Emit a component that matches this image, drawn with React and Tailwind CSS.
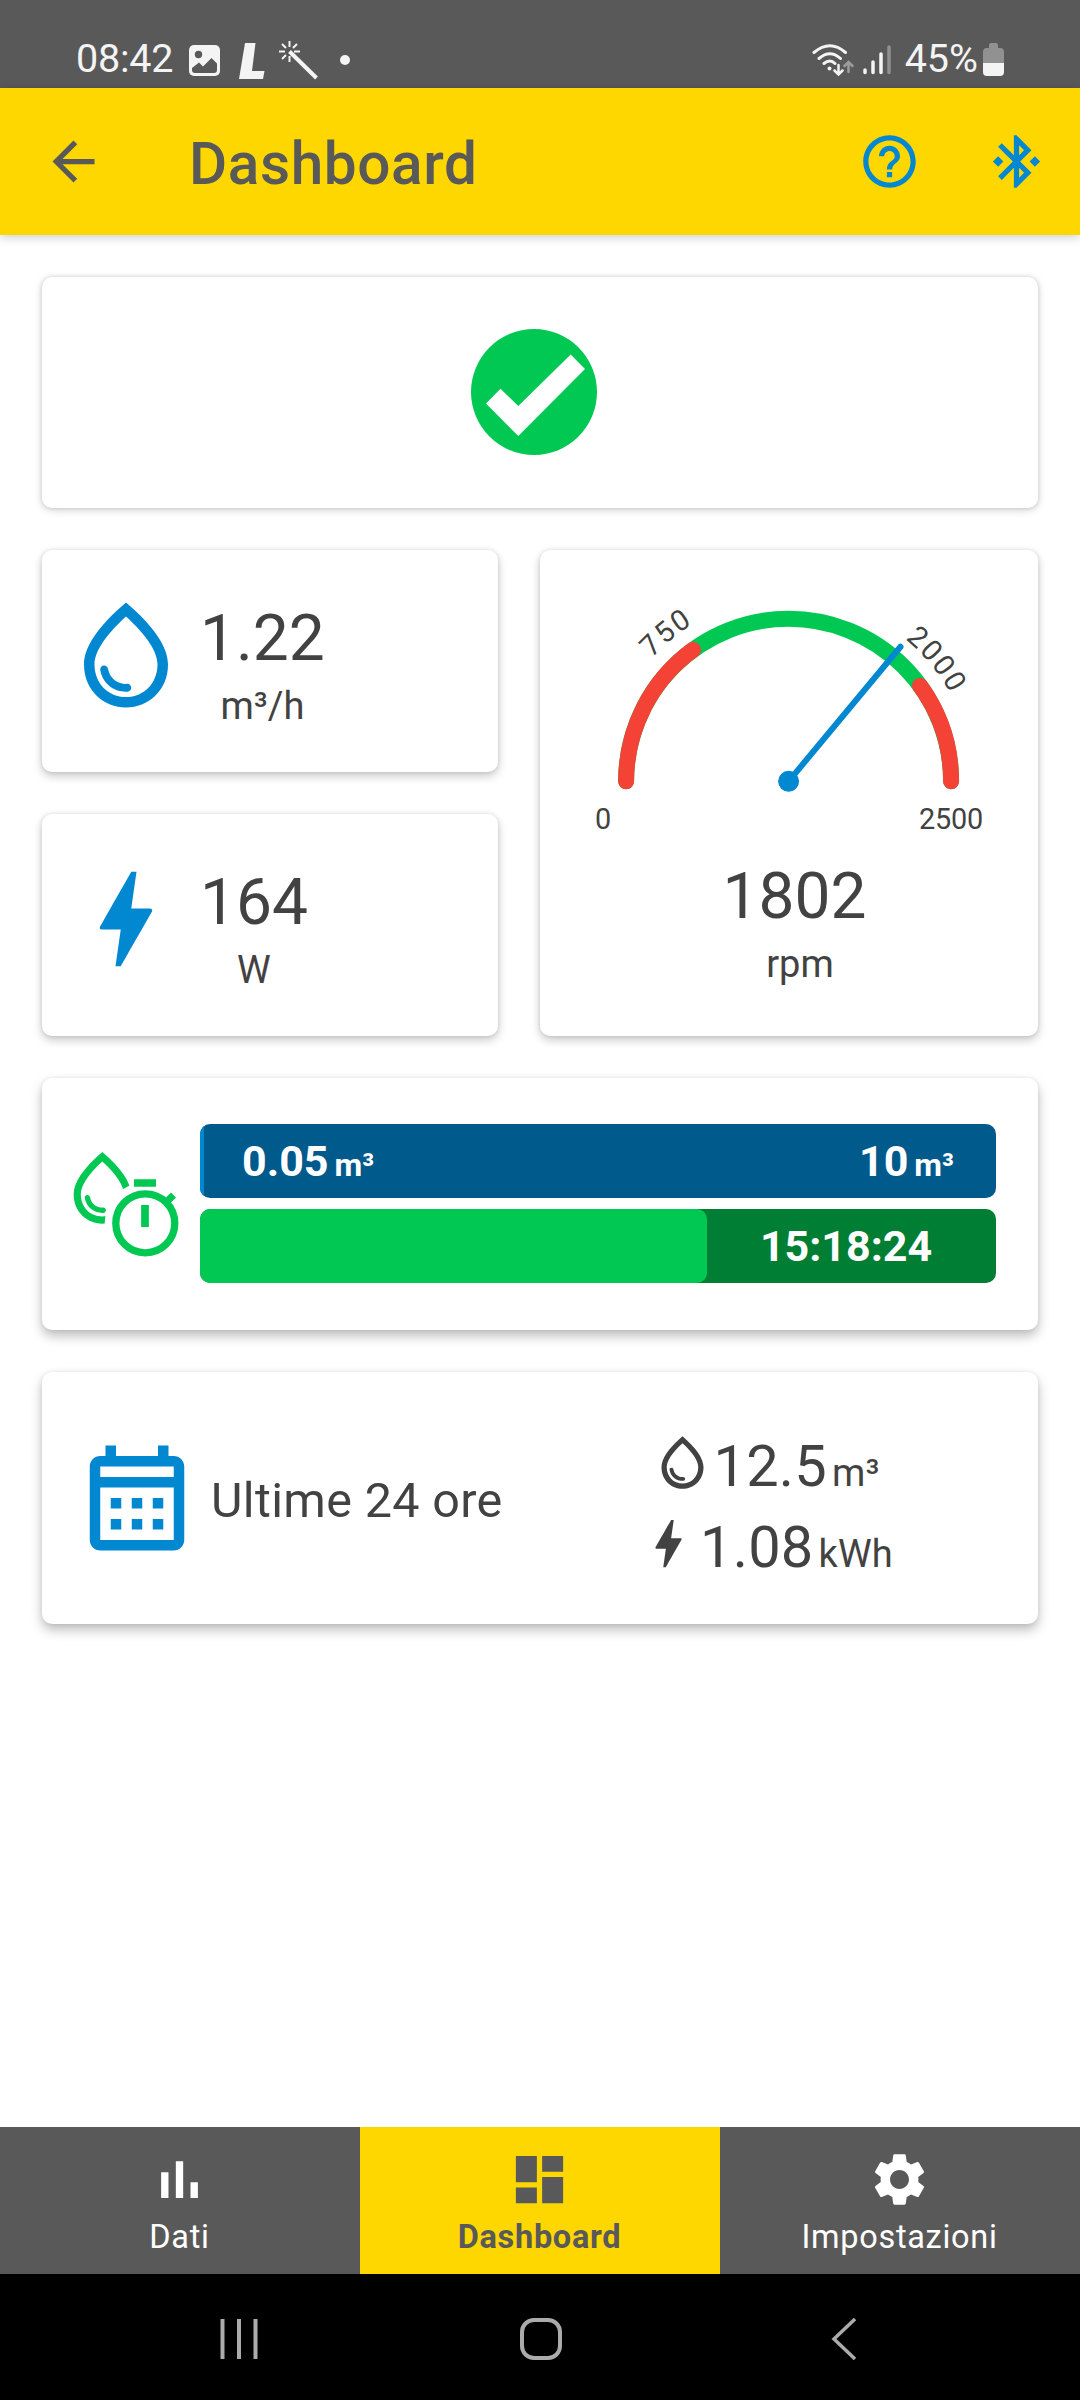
import {
  MdArrowBack,
  MdBolt,
  MdDashboard,
  MdHelpOutline,
  MdOutlineWaterDrop,
  MdSettings,
} from "react-icons/md";

const CARD = "rounded-[10px] bg-white";
const SHADOW_TOP = "shadow-[0_2px_9px_rgba(0,0,0,0.18),0_0_4px_rgba(0,0,0,0.12)]";
const SHADOW_MID = "shadow-[0_4px_10px_rgba(0,0,0,0.22),0_0_4px_rgba(0,0,0,0.1)]";
const SHADOW_LOW = "shadow-[0_6px_12px_rgba(0,0,0,0.26),0_0_4px_rgba(0,0,0,0.08)]";

const TABS = [
  { label: "Dati", icon: BarsIcon },
  { label: "Dashboard", icon: MdDashboard, active: true },
  { label: "Impostazioni", icon: MdSettings },
];

// Gauge geometry, in the card's own pixels
const CX = 248.6;
const CY = 231.3;
const RADIUS = 162.5;
const MAX_RPM = 2500;

function polar(value, radius) {
  const a = Math.PI * (1 - value / MAX_RPM);
  return [CX + radius * Math.cos(a), CY - radius * Math.sin(a)];
}

function arc(from, to, radius = RADIUS) {
  const [x1, y1] = polar(from, radius);
  const [x2, y2] = polar(to, radius);
  return `M${x1} ${y1}A${radius} ${radius} 0 0 1 ${x2} ${y2}`;
}

function BarsIcon({ size }) {
  return (
    <svg width={size} height={size} viewBox="0 0 24 24" fill="currentColor">
      <path d="M5 9.200h2.800V19H5zM10.600 5h2.800v14h-2.800zM16.200 13H19v6h-2.800z" />
    </svg>
  );
}

function CalendarIcon({ size, className }) {
  return (
    <svg width={size} height={size} viewBox="0 0 24 24" fill="currentColor" className={className}>
      <path
        fillRule="evenodd"
        d="M19 4h-1V2h-2v2H8V2H6v2H5C3.900 4 3 4.900 3 6v14c0 1.100.9 2 2 2h14c1.100 0 2-.9 2-2V6c0-1.100-.9-2-2-2zM5 6h14v2H5zM5 10h14v10H5z"
      />
      <path d="M7 12h2v2H7zM11 12h2v2h-2zM15 12h2v2h-2zM7 16h2v2H7zM11 16h2v2h-2zM15 16h2v2h-2z" />
    </svg>
  );
}

function StatusBar() {
  return (
    <div className="flex h-[88px] items-start bg-[#595959] pt-[36px] pr-[76px] pl-[76px] text-[39.5px] leading-[46px] text-[#f4f4f4]">
      <span className="tracking-[-0.2px]">08:42</span>
      <svg className="mt-[9px] ml-[16px]" width="31" height="31" viewBox="0 0 31 31">
        <rect width="31" height="31" rx="5" fill="#f4f4f4" />
        <circle cx="9.500" cy="9.500" r="3.700" fill="#595959" />
        <path d="M3 23L10 17.500L14 21.500L22.500 13L28 18.500V25Q28 28 25 28H6Q3 28 3 25Z" fill="#595959" />
      </svg>
      <svg className="mt-[7px] ml-[19px]" width="26" height="36" viewBox="0 0 26 36" fill="#f4f4f4">
        <path d="M6 0H16.500L13 28H25.500L24 36H0Z" />
      </svg>
      <svg className="mt-[5px] ml-[14px]" width="40" height="39" viewBox="0 0 40 39" fill="none" stroke="#f4f4f4">
        <path d="M10.500 0V6M10.500 15V21M0 10.500H6M15 10.500H21M3 3L7 7M18 3L14 7M3 18L7 14" strokeWidth="2" />
        <path d="M10.500 10.500L37.500 37" strokeWidth="4" />
      </svg>
      <span className="mt-[19px] ml-[21px] size-[10px] rounded-full bg-[#f4f4f4]" />
      <svg className="mt-[8px] ml-auto" width="43" height="32" viewBox="0 0 43 32" fill="none" stroke="#f4f4f4" strokeLinecap="round">
        <path d="M2 8.500Q18 -5 33.500 8.500M7 14.500Q18 5 28.500 14.500M12 19.500Q18 14.500 23 19.500" strokeWidth="3" />
        <circle cx="17.500" cy="24.500" r="2" fill="#f4f4f4" stroke="none" />
        <path d="M26.500 21V30M22.500 26.500L26.500 30.500L30.500 26.500" strokeWidth="2.500" />
        <path d="M36.500 28V19M32.500 22L36.500 18L40.500 22" stroke="#9c9c9c" strokeWidth="2.500" />
      </svg>
      <svg className="mt-[9px] ml-[8px]" width="28" height="30" viewBox="0 0 28 30" fill="none" strokeWidth="3.500" strokeLinecap="round">
        <path d="M2 25V27.500M10 17V27.500M18 9V27.500" stroke="#f4f4f4" />
        <path d="M26 2V27.500" stroke="#919191" />
      </svg>
      <span className="ml-[14px]">45%</span>
      <svg className="mt-[7px] ml-[5px]" width="21" height="33" viewBox="0 0 21 33">
        <path d="M6 5V2Q6 0 8 0H13Q15 0 15 2V5H17Q21 5 21 9V20H0V9Q0 5 4 5Z" fill="#919191" />
        <path d="M0 20H21V29Q21 33 17 33H4Q0 33 0 29Z" fill="#f4f4f4" />
      </svg>
    </div>
  );
}

function AppBar() {
  return (
    <header className="flex h-[147px] items-center bg-[#ffd700] pr-[32px] pl-[42px] text-[#595959] shadow-[0_2px_10px_rgba(0,0,0,0.2)]">
      <MdArrowBack size={63} />
      <h1 className="ml-[84px] pt-[5px] text-[58.5px] leading-[68px] font-medium tracking-[0.6px]">Dashboard</h1>
      <MdHelpOutline size={63} className="ml-auto text-[#0288d1]" />
      <svg width="63" height="63" viewBox="0 0 24 24" className="ml-[64px] text-[#0288d1]" fill="currentColor">
        <path d="M7 12l-2-2-2 2 2 2 2-2zm10.710-4.290L12 2h-1v7.590L6.410 5 5 6.410 10.590 12 5 17.590 6.410 19 11 14.410V22h1l5.710-5.710-4.300-4.290 4.300-4.290zM13 5.830l1.880 1.880L13 9.590V5.830zm1.880 10.460L13 18.170v-3.760l1.880 1.880zM19 10l-2 2 2 2 2-2-2-2z" />
      </svg>
    </header>
  );
}

function StatusCard() {
  return (
    <section className={`${CARD} ${SHADOW_TOP} flex h-[231px] items-start justify-center pt-[52px] pr-[12px]`}>
      <svg width="126" height="126" viewBox="0 0 126 126">
        <circle cx="63" cy="63" r="63" fill="#00c853" />
        <path d="M15 74.500L29.500 59.700L47.300 77L99.700 25.500L114 40L47.300 107Z" fill="#fff" />
      </svg>
    </section>
  );
}

function MetricCard({ icon: Icon, value, unit }) {
  return (
    <section className={`${CARD} ${SHADOW_MID} flex h-[222px] items-start pt-[42px] pl-[21px]`}>
      <Icon size={126} className="shrink-0 text-[#0288d1]" />
      <div className="ml-[11px] flex flex-col items-center pt-[10px]">
        <span className="text-[64px] leading-[74px]">{value}</span>
        <span className="mt-[9px] text-[38px] leading-[43px]">{unit}</span>
      </div>
    </section>
  );
}

function GaugeCard({ rpm }) {
  const [nx, ny] = polar(rpm, 175);
  return (
    <section className={`${CARD} ${SHADOW_MID} flex w-[498px] flex-col items-center`}>
      <svg width="498" height="310" viewBox="0 0 498 310" fill="none" strokeLinecap="round">
        <path d={arc(0, MAX_RPM)} stroke="#00c853" strokeWidth="16" />
        <path d={arc(0, 750)} stroke="#f44336" strokeWidth="16" />
        <path d={arc(2000, MAX_RPM)} stroke="#f44336" strokeWidth="16" />
        <path d={`M${CX} ${CY}L${nx} ${ny}`} stroke="#0288d1" strokeWidth="6" />
        <circle cx={CX} cy={CY} r="10.500" fill="#0288d1" />
        <path id="gauge-labels" d={arc(0, MAX_RPM, 184)} />
        <g fill="#424242" fontSize="28.875">
          <text letterSpacing="2">
            <textPath href="#gauge-labels" startOffset="135">750</textPath>
          </text>
          <text letterSpacing="2">
            <textPath href="#gauge-labels" startOffset="415">2000</textPath>
          </text>
          <text x="55" y="279">0</text>
          <text x="379" y="279" letterSpacing="-0.200">2500</text>
        </g>
      </svg>
      <span className="pl-[11px] text-[64px] leading-[74px]">{rpm}</span>
      <span className="mt-[9px] pl-[22px] text-[38px] leading-[43px]">rpm</span>
    </section>
  );
}

function DropTimerIcon() {
  return (
    <svg width="108" height="108" viewBox="72 1150 108 108" fill="none" stroke="#00c853" className="shrink-0">
      <mask id="timer-cut">
        <rect x="50" y="1140" width="140" height="130" fill="#fff" stroke="none" />
        <circle cx="145.300" cy="1223" r="40.600" fill="#000" stroke="none" />
      </mask>
      <g mask="url(#timer-cut)">
        <g transform="translate(59.300 1144.800) scale(3.585)" fill="#00c853" stroke="none">
          <path d="M12 2c-5.330 4.550-8 8.480-8 11.800 0 4.980 3.800 8.200 8 8.200s8-3.220 8-8.200c0-3.320-2.670-7.250-8-11.800zm0 18c-3.350 0-6-2.570-6-6.200 0-2.340 1.950-5.440 6-9.140 4.050 3.700 6 6.790 6 9.140 0 3.630-2.650 6.200-6 6.200zm-4.170-6c.37 0 .67.26.74.62.41 2.220 2.280 2.980 3.640 2.870.43-.02.79.32.79.75 0 .4-.32.73-.72.75-2.130.13-4.620-1.090-5.190-4.120a.75.75 0 01.740-.87z" />
        </g>
      </g>
      <circle cx="145.300" cy="1223.300" r="29.500" strokeWidth="7.300" />
      <path d="M134 1183H156M145 1205V1227" strokeWidth="7.700" />
      <path d="M166 1202.500L173.500 1195" strokeWidth="7" />
    </svg>
  );
}

function ProgressCard() {
  return (
    <section className={`${CARD} ${SHADOW_LOW} flex h-[252px] items-start pt-[46px] pr-[42px] pl-[30px] font-bold text-white`}>
      <div className="pt-[26px]">
        <DropTimerIcon />
      </div>
      <div className="ml-[20px] flex flex-1 flex-col gap-[11px] text-[43px] leading-[50px]">
        <div className="relative flex h-[74px] items-center justify-between overflow-hidden rounded-[10px] bg-[#005a8c] pr-[42px] pl-[42px]">
          <div className="absolute inset-y-0 left-0 rounded-[10px] bg-[#0288d1]" style={{ width: `${(0.05 / 10) * 100}%` }} />
          <span className="flex items-baseline gap-[6px]">
            0.05<small className="text-[32px] leading-[40px]">m³</small>
          </span>
          <span className="flex items-baseline gap-[6px]">
            10<small className="text-[32px] leading-[40px]">m³</small>
          </span>
        </div>
        <div className="flex h-[74px] overflow-hidden rounded-[10px] bg-[#007e33]">
          <div className="rounded-[10px] bg-[#00c853]" style={{ width: "63.700%" }} />
          <span className="flex flex-1 items-center justify-center pr-[11px]">15:18:24</span>
        </div>
      </div>
    </section>
  );
}

function LastDayCard() {
  return (
    <section className={`${CARD} ${SHADOW_LOW} flex h-[252px] items-start pt-[59px] pl-[32px]`}>
      <div className="flex h-[134px] items-center">
        <CalendarIcon size={126} className="shrink-0 text-[#0288d1]" />
        <span className="ml-[11px] pt-[5px] text-[48.5px] leading-[56px] tracking-[0.35px]">Ultime 24 ore</span>
      </div>
      <div className="mr-[145px] ml-auto flex flex-col items-center text-[57.75px] leading-[68px]">
        <div className="flex h-[81px] items-start">
          <MdOutlineWaterDrop size={63} />
          <span className="flex items-baseline gap-[5px] pt-[1px] tracking-[0.2px]">
            12.5<small className="text-[38px]">m³</small>
          </span>
        </div>
        <div className="flex items-start">
          <MdBolt size={63} />
          <span className="flex items-baseline gap-[5px] pt-[1px] tracking-[0.2px]">
            1.08<small className="text-[38px]">kWh</small>
          </span>
        </div>
      </div>
    </section>
  );
}

function TabBar() {
  return (
    <nav className="grid h-[147px] grid-cols-3 text-[32.5px] leading-[37px] tracking-[0.7px]">
      {TABS.map(({ label, icon: Icon, active }) => (
        <a
          key={label}
          className={`flex flex-col items-center pt-[21px] pr-px ${
            active ? "bg-[#ffd700] font-bold text-[#595959]" : "bg-[#595959] text-white"
          }`}
        >
          <Icon size={63} />
          <span className="mt-[8px]">{label}</span>
        </a>
      ))}
    </nav>
  );
}

function SystemNav() {
  return (
    <div className="flex h-[126px] items-center bg-black pt-[4px] pl-[219px]">
      <svg width="40" height="42" viewBox="0 0 40 42" stroke="#ababab" strokeWidth="4">
        <path d="M3.500 1V41M20 1V41M36.500 1V41" />
      </svg>
      <svg className="ml-[261px]" width="42" height="42" viewBox="0 0 42 42" fill="none" stroke="#ababab" strokeWidth="4">
        <rect x="2" y="2" width="38" height="38" rx="12" />
      </svg>
      <svg className="ml-[269px]" width="26" height="42" viewBox="0 0 26 42" fill="none" stroke="#ababab" strokeWidth="3.500">
        <path d="M24 1L3 21L24 41" />
      </svg>
    </div>
  );
}

export default function App() {
  return (
    <div className="flex h-[2400px] w-[1080px] flex-col bg-white font-['Roboto',sans-serif] text-[#424242]">
      <StatusBar />
      <AppBar />
      <main className="flex flex-1 flex-col gap-[42px] p-[42px]">
        <StatusCard />
        <div className="flex h-[486px] gap-[42px]">
          <div className="flex flex-1 flex-col gap-[42px]">
            <MetricCard icon={MdOutlineWaterDrop} value="1.22" unit="m³/h" />
            <MetricCard icon={MdBolt} value="164" unit="W" />
          </div>
          <GaugeCard rpm={1802} />
        </div>
        <ProgressCard />
        <LastDayCard />
      </main>
      <TabBar />
      <SystemNav />
    </div>
  );
}
